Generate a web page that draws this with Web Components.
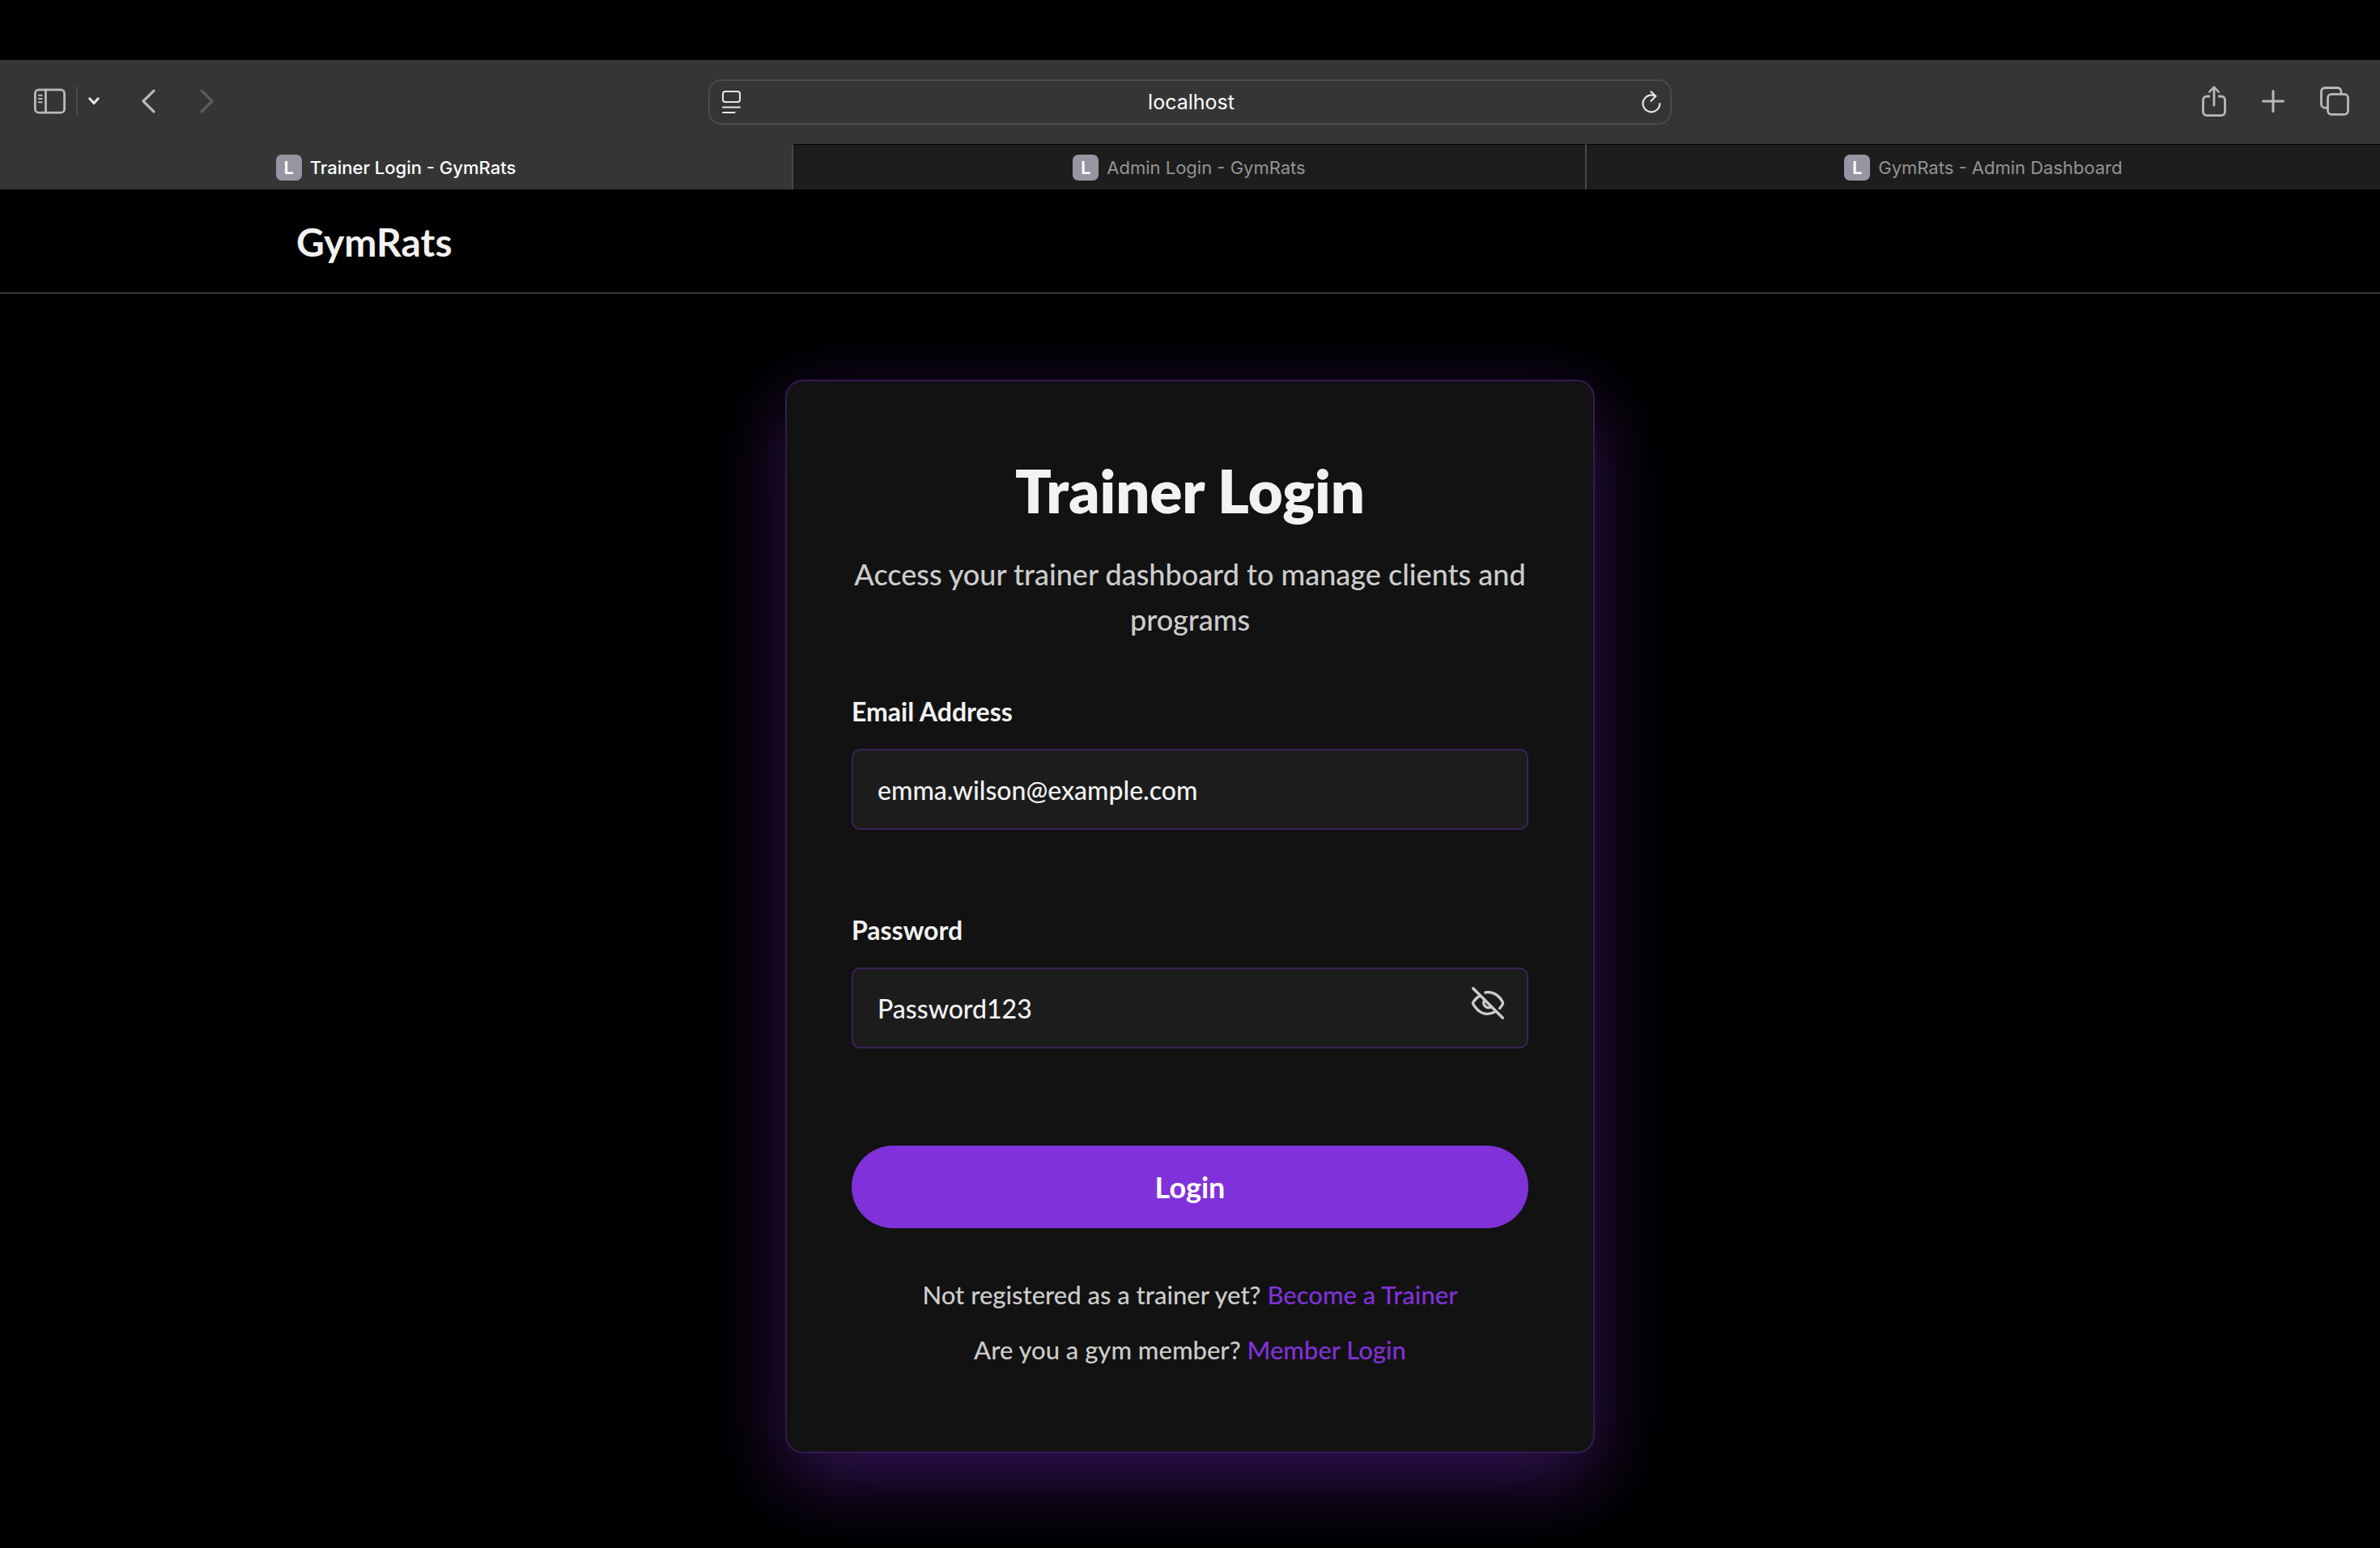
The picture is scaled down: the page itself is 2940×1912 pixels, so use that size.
<!DOCTYPE html>
<html lang="en">
<head>
<meta charset="utf-8">
<title>Trainer Login - GymRats</title>
<style>
  html, body { margin: 0; background: #000; }
  body { font-family: Lato, "Open Sans", sans-serif; color: #f2f2f2; }
</style>
</head>
<body>
<app-shell>
  <browser-chrome slot="chrome" address="localhost">
    <browser-tab active>Trainer Login - GymRats</browser-tab>
    <browser-tab>Admin Login - GymRats</browser-tab>
    <browser-tab>GymRats - Admin Dashboard</browser-tab>
  </browser-chrome>
  <site-header slot="header">GymRats</site-header>
  <login-card>
    <span slot="title">Trainer Login</span>
    <span slot="subtitle">Access your trainer dashboard to manage clients and programs</span>
    <form-field label="Email Address" name="email" value="emma.wilson@example.com"></form-field>
    <form-field label="Password" name="password" value="Password123" reveal></form-field>
    <card-link slot="links" label="Become a Trainer">Not registered as a trainer yet?</card-link>
    <card-link slot="links" label="Member Login">Are you a gym member?</card-link>
  </login-card>
</app-shell>

<script>
  const ICONS = {
    sidebar: [39, 32, '<g fill="none" stroke="currentColor" stroke-width="2.8" stroke-linecap="round"><rect x="1.4" y="1.8" width="36.2" height="28.4" rx="4.5"/><path d="M14.5 2v28"/><path stroke-width="2" d="M5.8 8.7h4M5.8 13h4M5.8 17.3h4"/></g>'],
    chevron: [14, 10, '<path d="M1.8 1.8L7 7.6l5.200-5.800" fill="none" stroke="currentColor" stroke-width="3" stroke-linecap="round" stroke-linejoin="round"/>'],
    back: [17, 30, '<path d="M15 2.200L2 15l13 12.800" fill="none" stroke="currentColor" stroke-width="3.2" stroke-linecap="round" stroke-linejoin="round"/>'],
    forward: [17, 30, '<path d="M2 2.200L15 15 2 27.800" fill="none" stroke="currentColor" stroke-width="3.2" stroke-linecap="round" stroke-linejoin="round"/>'],
    reader: [23, 28, '<g fill="none" stroke="currentColor" stroke-width="2" stroke-linecap="round"><rect x="1" y="1" width="21" height="13" rx="3"/><path d="M1 20.500h21M1 27h14.500"/></g>'],
    reload: [24, 28, '<g fill="none" stroke="currentColor" stroke-width="2.200" stroke-linecap="round" stroke-linejoin="round"><path d="M22.300 16.200A10.400 10.400 0 1 1 17 6.800"/><path d="M11.500 1.200l5.800 5.600-5.800 5.900"/></g>'],
    share: [30, 38, '<g fill="none" stroke="currentColor" stroke-width="2.800" stroke-linecap="round" stroke-linejoin="round"><path d="M10 13H6a4.500 4.500 0 0 0-4.500 4.500v14.600A4.500 4.500 0 0 0 6 36.600h18a4.500 4.500 0 0 0 4.500-4.500V17.500A4.500 4.500 0 0 0 24 13h-4" stroke-linecap="butt"/><path d="M15 24V2"/><path stroke-width="2.400" d="M9.200 7.600L15 1.600l5.800 6"/></g>'],
    plus: [28, 28, '<path d="M14 1.500v25M1.500 14h25" fill="none" stroke="currentColor" stroke-width="3" stroke-linecap="round"/>'],
    tabs: [36, 36, '<g fill="none" stroke="currentColor" stroke-width="2.800"><rect x="9.500" y="9.300" width="25" height="25" rx="4.500"/><path d="M9 26.200H6a4.500 4.500 0 0 1-4.500-4.500V6A4.500 4.500 0 0 1 6 1.500h15.500A4.500 4.500 0 0 1 26 6v3"/></g>'],
    eyeoff: [44, 44, '<g fill="none" stroke="currentColor" stroke-width="3.400" stroke-linecap="round" stroke-linejoin="round"><path d="M3.700 3.700l36.600 36.600"/><path d="M18.800 8.900C27.500 7 35.500 12 40.100 20.500c.6 1.100.6 1.900 0 3-1.100 1.900-2.200 3.400-3.500 4.800"/><path d="M12.300 12.700C8.700 14.700 5.700 17.600 3.900 20.600c-.7 1-.7 1.800 0 2.800C10.600 34.700 20.500 38.500 31.200 32.600"/><path d="M17.800 18.300a5.900 5.900 0 0 0 8.200 8.200"/></g>']
  };
  const icon = name => {
    const [w, h, body] = ICONS[name];
    return `<svg width="${w}" height="${h}" viewBox="0 0 ${w} ${h}" aria-hidden="true">${body}</svg>`;
  };
  const RESET = `
    *, *::before, *::after { box-sizing: border-box; }
    svg { display: block; flex: none; }
    button { display: block; margin: 0; padding: 0; border: 0; background: none; color: inherit; font: inherit; cursor: pointer; }
    input { margin: 0; border: 0; outline: 0; background: none; color: inherit; font: inherit; }
  `;
  const define = (tag, render) => customElements.define(tag, class extends HTMLElement {
    connectedCallback() {
      if (this.shadowRoot) return;
      const t = document.createElement('template');
      t.innerHTML = render(this);
      this.attachShadow({ mode: 'open' }).append(t.content.cloneNode(true));
    }
  });

  define('app-shell', () => `
    <style>${RESET}
      :host { display: flex; flex-direction: column; min-height: 100vh; }
      main { display: flex; flex-direction: column; align-items: center; padding: 106px 40px 80px; }
    </style>
    <slot name="chrome"></slot>
    <slot name="header"></slot>
    <main><slot></slot></main>`);

  define('browser-chrome', el => `
    <style>${RESET}
      :host { display: block; padding-top: 74px; background: #000; font-family: Inter, "Liberation Sans", sans-serif; }
      .toolbar { display: grid; grid-template-columns: 1fr minmax(0, 1190px) 1fr; align-items: center; height: 104px; background: #353535; color: #b9b9b9; }
      .left, .right { display: flex; align-items: center; }
      .left { padding-left: 42px; padding-bottom: 2px; }
      .right { justify-content: flex-end; gap: 44px; padding-right: 38px; padding-bottom: 2px; }
      .rule { width: 2px; height: 36px; margin: 0 13px; background: #4a4a4a; }
      .menu { color: #e6e6e6; margin-right: 52px; }
      .back { margin-right: 55px; }
      .forward { color: #5c5c5c; }
      .address { display: flex; align-items: center; height: 56px; padding: 0 11px 0 15px; border: 2px solid #4c4c4c; border-radius: 16px; color: #e6e6e6; }
      .address input { flex: 1; min-width: 0; text-align: center; font-size: 25px; line-height: 32px; color: #fff; }
      .tabs { display: flex; height: 56px; background: #1d1d1d; }
    </style>
    <div class="toolbar">
      <div class="left">
        <button aria-label="Show sidebar">${icon('sidebar')}</button>
        <span class="rule"></span>
        <button class="menu" aria-label="Tab groups">${icon('chevron')}</button>
        <button class="back" aria-label="Back">${icon('back')}</button>
        <button class="forward" aria-label="Forward">${icon('forward')}</button>
      </div>
      <div class="address">
        <button aria-label="Page menu">${icon('reader')}</button>
        <input type="text" aria-label="Address" value="${el.getAttribute('address')}">
        <button aria-label="Reload">${icon('reload')}</button>
      </div>
      <div class="right">
        <button aria-label="Share">${icon('share')}</button>
        <button aria-label="New tab">${icon('plus')}</button>
        <button aria-label="Tab overview">${icon('tabs')}</button>
      </div>
    </div>
    <nav class="tabs"><slot></slot></nav>`);

  define('browser-tab', () => `
    <style>${RESET}
      :host { display: flex; flex: 0 0 calc(100% / 3); box-sizing: border-box; padding-top: 2px; border-right: 2px solid #474747; color: #949494; box-shadow: inset 0 1px #000; }
      :host(:last-child) { border-right: 0; }
      :host([active]) { background: #353535; color: #fff; font-weight: 500; box-shadow: none; }
      button { display: flex; flex: 1; align-items: center; justify-content: center; gap: 10px; font-size: 22px; line-height: 28px; }
      .badge { width: 32px; height: 32px; border-radius: 7px; background: #9696a3; color: #fff; font-weight: 600; line-height: 32px; text-align: center; }
    </style>
    <button><span class="badge">L</span><slot></slot></button>`);

  define('site-header', () => `
    <style>${RESET}
      :host { display: block; border-bottom: 2px solid #333; padding: 0 40px; }
      .inner { max-width: 2208px; margin: 0 auto; padding: 33px 0 31px; }
      a { color: #f2f2f2; text-decoration: none; font-size: 48px; font-weight: 700; line-height: 63px; display: inline-block; vertical-align: top; }
    </style>
    <div class="inner"><a href="#home"><slot></slot></a></div>`);

  define('login-card', () => `
    <style>${RESET}
      :host { display: block; width: 100%; max-width: 1000px; box-sizing: border-box; padding: 82px 80px 101px;
        border: 2px solid #351a52; border-radius: 22px; background: #121212;
        box-shadow: 0 32px 92px rgba(128, 48, 216, .4); }
      h1 { margin: 0 0 22px; font-size: 74px; font-weight: 800; line-height: 106px; text-align: center; }
      .subtitle { margin: 0; font-size: 36px; font-weight: 500; line-height: 56px; text-align: center; color: #cccccc; }
      .fields { display: flex; flex-direction: column; gap: 98px; margin: 60px 0 120px; }
      button { width: 100%; height: 102px; border-radius: 51px; background: #8031d9; color: #fff; font-size: 36px; font-weight: 700; }
      .links { display: flex; flex-direction: column; gap: 18px; margin-top: 57px; }
    </style>
    <form onsubmit="return false">
      <h1><slot name="title"></slot></h1>
      <p class="subtitle"><slot name="subtitle"></slot></p>
      <div class="fields"><slot></slot></div>
      <button type="submit">Login</button>
      <div class="links"><slot name="links"></slot></div>
    </form>`);

  define('form-field', el => `
    <style>${RESET}
      :host { display: block; }
      label { display: block; margin-bottom: 20px; font-size: 32px; font-weight: 700; line-height: 52px; }
      .box { position: relative; }
      input { display: block; width: 100%; height: 100px; padding: 0 30px; border: 2px solid #3b2258; border-radius: 10px; background: #1c1c1c; font-size: 32px; font-weight: 500; }
      button { position: absolute; top: 22px; right: 28px; color: #cccccc; }
    </style>
    <label for="field">${el.getAttribute('label')}</label>
    <div class="box">
      <input id="field" type="text" name="${el.getAttribute('name')}" value="${el.getAttribute('value')}">
      ${el.hasAttribute('reveal') ? `<button type="button" aria-label="Hide password">${icon('eyeoff')}</button>` : ''}
    </div>`);

  define('card-link', el => `
    <style>${RESET}
      :host { display: block; font-size: 31px; font-weight: 500; line-height: 50px; text-align: center; color: #cccccc; }
      a { color: #8031d9; text-decoration: none; }
    </style>
    <slot></slot> <a href="#link">${el.getAttribute('label')}</a>`);
</script>
</body>
</html>
